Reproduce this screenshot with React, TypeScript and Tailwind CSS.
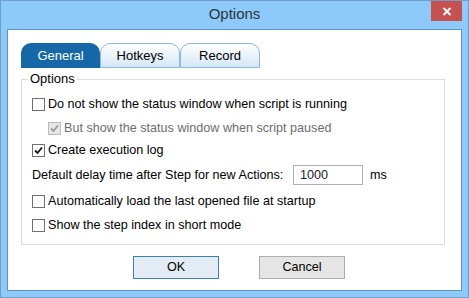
import React from "react";

const font = { fontFamily: '"Liberation Sans", Arial, sans-serif' };

function Box({ checked, disabled }: { checked?: boolean; disabled?: boolean }) {
  return (
    <div
      className={
        "w-[13px] h-[13px] border flex items-center justify-center shrink-0 " +
        (disabled ? "border-[#bcbcbc] bg-[#e6e6e6]" : "border-[#707070] bg-white")
      }
    >
      {checked && (
        <svg width="9" height="9" viewBox="0 0 9 9">
          <path
            d="M1 4.5 L3.5 7 L8 1.5"
            fill="none"
            stroke={disabled ? "#9a9a9a" : "#111"}
            strokeWidth="1.8"
          />
        </svg>
      )}
    </div>
  );
}

function Row({
  label,
  checked,
  disabled,
  className = "",
}: {
  label: string;
  checked?: boolean;
  disabled?: boolean;
  className?: string;
}) {
  return (
    <div className={"flex items-center h-[20px] gap-[3px] " + className}>
      <Box checked={checked} disabled={disabled} />
      <span className={disabled ? "text-[#6d6d6d]" : "text-black"}>{label}</span>
    </div>
  );
}

export default function App() {
  return (
    <div
      style={font}
      className="relative w-[469px] h-[298px] bg-[#8dc9f9] border border-[#6e9fcc] px-[6px] pb-[6px] flex flex-col text-[12.6px]"
    >
      <div className="h-[28px] flex items-center justify-center text-[15px] text-[#2b3440] pb-[1px]">
        Options
      </div>
      <div className="absolute left-[430px] top-0 w-[31px] h-[20px] bg-[#c75050] flex items-center justify-center">
        <svg width="10" height="9" viewBox="0 0 10 9">
          <path d="M1.5 1 L8.5 8 M8.5 1 L1.5 8" stroke="#fff" strokeWidth="2" />
        </svg>
      </div>
      <div className="flex-1 bg-white border border-[#5f95c6] flex flex-col">
        <div className="flex ml-[13px] mt-[13px] h-[25px] text-[13px]">
          <div className="w-[79px] h-[25px] rounded-t-[10px] bg-[#1567a8] text-white flex items-center justify-center">
            General
          </div>
          <div className="w-[80px] h-[25px] rounded-t-[10px] border border-[#8fb8dc] bg-gradient-to-b from-white to-[#d3e7f7] text-black flex items-center justify-center">
            Hotkeys
          </div>
          <div className="w-[80px] h-[25px] rounded-t-[10px] border border-[#8fb8dc] bg-gradient-to-b from-white to-[#d3e7f7] text-black flex items-center justify-center">
            Record
          </div>
        </div>
        <div className="relative ml-[13px] mt-[11px] w-[424px] border border-[#dcdcdc] pt-[14px] pb-[9px] pl-[10px]">
          <span className="absolute left-[6px] -top-[9px] bg-white px-[2px] leading-[16px] text-black text-[13px]">
            Options
          </span>
          <Row label="Do not show the status window when script is running" />
          <Row
            className="mt-[4px] ml-[16px]"
            label="But show the status window when script paused"
            checked
            disabled
          />
          <Row className="mt-[2px]" label="Create execution log" checked />
          <div className="mt-[4px] h-[22px] flex items-center">
            <span className="w-[261px]">Default delay time after Step for new Actions:</span>
            <div className="w-[70px] h-[20px] border border-[#abadb3] flex items-center pl-[6px] text-[#1a1a2a]">
              1000
            </div>
            <span className="ml-[7px]">ms</span>
          </div>
          <Row className="mt-[5px]" label="Automatically load the last opened file at startup" />
          <Row className="mt-[4px]" label="Show the step index in short mode" />
        </div>
        <div className="flex pl-[125px] gap-[40px] mt-[11px]">
          <div className="w-[86px] h-[23px] border border-[#3c7fb1] bg-[#e3ecf5] flex items-center justify-center text-black">
            OK
          </div>
          <div className="w-[86px] h-[23px] border border-[#adadad] bg-[#e5e5e5] flex items-center justify-center text-black">
            Cancel
          </div>
        </div>
      </div>
    </div>
  );
}
